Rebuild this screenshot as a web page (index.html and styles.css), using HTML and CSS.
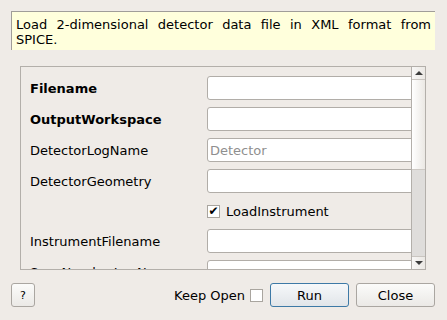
FILE: index.html
```html
<!DOCTYPE html>
<html lang="en">
<head>
    <meta charset="UTF-8">
    <title>LoadSpiceXML2DDet</title>
    <link rel="stylesheet" href="styles.css">
</head>
<body>
    <div class="dialog">
        <div class="description">Load 2-dimensional detector data file in XML format from SPICE.</div>

        <div class="scroll-area">
            <div class="properties">
                <label class="prop-label bold">Filename</label>
                <input type="text" class="prop-input">

                <label class="prop-label bold">OutputWorkspace</label>
                <input type="text" class="prop-input">

                <label class="prop-label">DetectorLogName</label>
                <input type="text" class="prop-input" placeholder="Detector">

                <label class="prop-label">DetectorGeometry</label>
                <input type="text" class="prop-input">

                <span></span>
                <label class="check-row"><span class="checkbox checked">✔</span>LoadInstrument</label>

                <label class="prop-label">InstrumentFilename</label>
                <input type="text" class="prop-input">

                <label class="prop-label">ScanNumberLogName</label>
                <input type="text" class="prop-input">
            </div>
            <div class="scrollbar">
                <div class="arrow up"></div>
                <div class="thumb"></div>
                <div class="track"></div>
                <div class="arrow down"></div>
            </div>
        </div>

        <div class="footer">
            <button type="button" class="btn help">?</button>
            <span class="spacer"></span>
            <label class="keep-open">Keep Open <span class="checkbox"></span></label>
            <button type="button" class="btn default">Run</button>
            <button type="button" class="btn">Close</button>
        </div>
    </div>
</body>
</html>
```

FILE: styles.css
```css
* {
    box-sizing: border-box;
}

body {
    margin: 0;
    background-color: #efebe7;
    font-family: 'DejaVu Sans', sans-serif;
    font-size: 13px;
    color: #000;
}

.dialog {
    width: 447px;
    height: 320px;
    padding: 11px 12px 12px 11px;
    display: flex;
    flex-direction: column;
}

.description {
    height: 39px;
    background-color: #ffffdc;
    border-top: 1px solid #a09d99;
    border-left: 1px solid #a09d99;
    padding: 5px 4px 0 4px;
    line-height: 15px;
    text-align: justify;
}

.scroll-area {
    margin: 16px 9px 0 9px;
    height: 204px;
    border: 1px solid #b3afaa;
    display: flex;
    overflow: hidden;
}

.properties {
    flex: 1;
    overflow: hidden;
    display: grid;
    grid-template-columns: 177px 215px;
    grid-template-rows: 24px 24px 24px 24px 22px 24px 24px;
    row-gap: 7px;
    padding: 9px 0 0 9px;
    align-items: center;
}

.prop-label {
    white-space: nowrap;
}

.bold {
    font-weight: bold;
}

.prop-input {
    height: 24px;
    width: 215px;
    border: 1px solid #b1ada8;
    border-radius: 3px;
    background: #fff;
    font-family: inherit;
    font-size: 13px;
    padding: 0 2px;
}

.prop-input::placeholder {
    color: #8f8f8f;
}

.check-row {
    display: flex;
    align-items: center;
    gap: 6px;
}

.checkbox {
    display: inline-flex;
    width: 13px;
    height: 13px;
    border: 1px solid #a9a59f;
    background: #fff;
    align-items: center;
    justify-content: center;
    font-size: 12px;
    line-height: 1;
}

.checked {
    font-weight: bold;
}

.scrollbar {
    width: 14px;
    border-left: 1px solid #b3afaa;
    display: flex;
    flex-direction: column;
}

.arrow {
    height: 13px;
    background: linear-gradient(to right, #f8f7f6, #ebe8e4);
    display: flex;
    justify-content: center;
    align-items: center;
}

.arrow::after {
    content: '';
    border-left: 4px solid transparent;
    border-right: 4px solid transparent;
}

.up {
    border-bottom: 1px solid #c9c5c0;
}

.up::after {
    border-bottom: 4px solid #3c3c3c;
}

.down {
    border-top: 1px solid #c9c5c0;
}

.down::after {
    border-top: 4px solid #3c3c3c;
}

.thumb {
    height: 90px;
    background: linear-gradient(to right, #ffffff, #ebe8e4);
    border-bottom: 1px solid #cdc9c4;
}

.track {
    flex: 1;
    background: #dfdddb;
}

.footer {
    margin-top: 13px;
    display: flex;
    align-items: center;
    gap: 7px;
}

.spacer {
    flex: 1;
}

.keep-open {
    display: flex;
    align-items: center;
    gap: 5px;
}

.btn {
    height: 24px;
    width: 79px;
    border: 1px solid #aaa6a1;
    border-radius: 3px;
    background: linear-gradient(#fbfbfa, #ebe9e6);
    font-family: inherit;
    font-size: 13px;
    color: #000;
    padding: 0;
}

.help {
    width: 24px;
    font-size: 11px;
}

.default {
    border-color: #3d79a6;
    background: linear-gradient(#f6f8fa, #e1e5e9);
}
```
